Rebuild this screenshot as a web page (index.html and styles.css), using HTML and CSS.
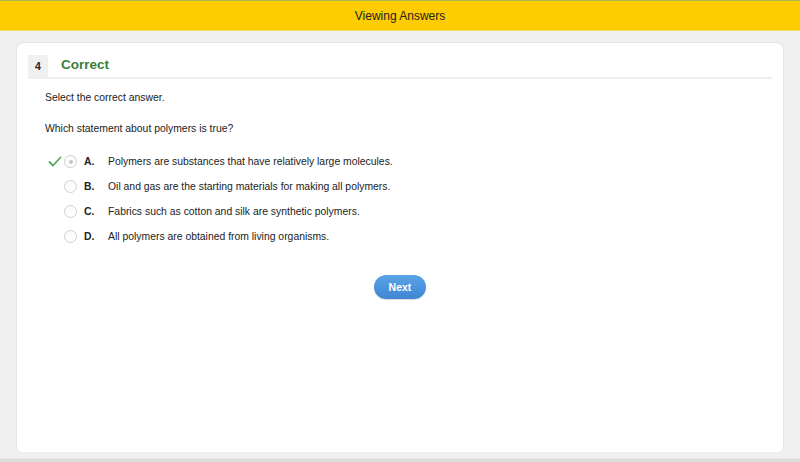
FILE: index.html
```html
<!DOCTYPE html>
<html>
<head>
<meta charset="utf-8">
<link rel="stylesheet" href="styles.css">
</head>
<body>
<div class="page">
  <header class="topbar">Viewing Answers</header>
  <main class="stage">
    <section class="card">
      <div class="qhead">
        <span class="qnum">4</span>
        <span class="qstatus">Correct</span>
      </div>
      <div class="qbody">
        <p class="prompt">Select the correct answer.</p>
        <p class="question">Which statement about polymers is true?</p>
        <ul class="options">
          <li class="option">
            <span class="mark"><svg width="14" height="12" viewBox="0 0 14 12"><path d="M1.5 6 L5 9.5 L12.5 1.5" fill="none" stroke="#52a85a" stroke-width="1.8" stroke-linecap="round" stroke-linejoin="round"/></svg></span>
            <span class="radio selected"></span>
            <span class="letter">A.</span>
            <span class="text">Polymers are substances that have relatively large molecules.</span>
          </li>
          <li class="option">
            <span class="mark"></span>
            <span class="radio"></span>
            <span class="letter">B.</span>
            <span class="text">Oil and gas are the starting materials for making all polymers.</span>
          </li>
          <li class="option">
            <span class="mark"></span>
            <span class="radio"></span>
            <span class="letter">C.</span>
            <span class="text">Fabrics such as cotton and silk are synthetic polymers.</span>
          </li>
          <li class="option">
            <span class="mark"></span>
            <span class="radio"></span>
            <span class="letter">D.</span>
            <span class="text">All polymers are obtained from living organisms.</span>
          </li>
        </ul>
      </div>
      <div class="actions"><button class="next">Next</button></div>
    </section>
  </main>
  <div class="bottombar"></div>
</div>
</body>
</html>
```
FILE: styles.css
```css
html, body { margin: 0; padding: 0; }
body {
  width: 800px; height: 462px; overflow: hidden;
  font-family: "Liberation Sans", Arial, sans-serif;
  background: #f0f0f0;
  color: #222;
}
.page { display: flex; flex-direction: column; height: 462px; }
.topbar {
  height: 29px;
  border-top: 1px solid #a8b84a;
  border-bottom: 1px solid #f5dd6a;
  background: #ffcc00;
  color: #222;
  font-size: 12px;
  display: flex; align-items: center; justify-content: center;
}
.stage {
  flex: 1;
  padding: 11px 16px 0 16px;
  display: flex;
}
.card {
  flex: 1;
  background: #fff;
  border: 1px solid #e4e4e4;
  border-bottom: none;
  border-radius: 8px 8px 6px 6px;
  padding: 12px 11px 0 11px;
  margin-bottom: 6px;
}
.qhead {
  display: flex; align-items: center;
  height: 22px;
  border-bottom: 2px solid #eeeeee;
}
.qnum {
  width: 20px; height: 22px;
  background: #f0f0f0;
  font-size: 10.5px; font-weight: bold;
  display: flex; align-items: center; justify-content: center;
}
.qstatus {
  margin-left: 13px;
  margin-bottom: 3px;
  color: #3a7d3a;
  font-size: 13.5px; font-weight: bold;
}
.qbody { padding-left: 17px; }
.prompt, .question { margin: 0; font-size: 10.4px; color: #222; }
.prompt { margin-top: 13px; }
.question { margin-top: 20px; }
.options { list-style: none; margin: 15px 0 0 0; padding: 0; }
.option {
  display: flex; align-items: center;
  height: 25px;
  font-size: 10.4px;
}
.mark { width: 16px; height: 12px; margin-left: 3px; display: flex; align-items: center; }
.radio {
  width: 13px; height: 13px;
  border: 1px solid #d0d0d0;
  border-radius: 50%;
  box-sizing: border-box;
  position: relative;
  background: linear-gradient(#fafafa, #ffffff);
}
.radio.selected::after {
  content: ""; position: absolute;
  left: 3.5px; top: 3.5px; width: 4px; height: 4px;
  border-radius: 50%; background: #c4c4c4;
}
.letter { font-weight: bold; margin-left: 7px; width: 24px; }
.text { color: #222; }
.actions { display: flex; justify-content: center; margin-top: 26px; }
.next {
  width: 52px; height: 24px;
  border: none; border-radius: 12px;
  background: linear-gradient(#5aa3e6, #3e86d4);
  color: #fff;
  font-family: "Liberation Sans", Arial, sans-serif;
  font-size: 10.5px; font-weight: bold;
  box-shadow: 0 1px 1px rgba(0,0,0,0.15);
}
.bottombar { height: 3px; background: #dcdcdc; border-top: 1px solid #e6e6e6; }
```
